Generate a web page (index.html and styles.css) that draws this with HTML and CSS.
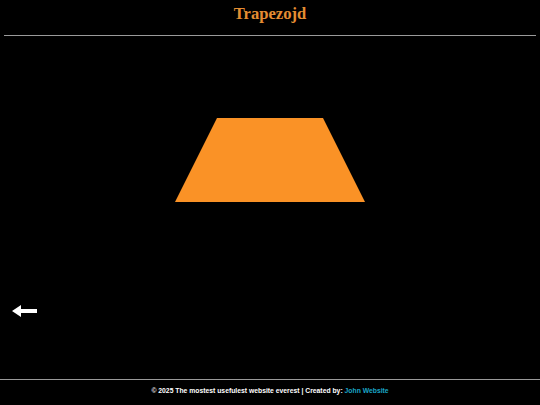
FILE: index.html
```html
<!DOCTYPE html>
<html>
<head>
<meta charset="utf-8">
<link rel="stylesheet" href="styles.css">
</head>
<body>
<div class="page">
  <header class="header">
    <h1 class="title">Trapezojd</h1>
    <hr class="rule">
  </header>
  <main class="main">
    <div class="stage">
      <div class="trapezoid"></div>
    </div>
    <div class="nav">
      <svg class="back" width="26" height="14" viewBox="0 0 26 14">
        <polygon points="0,7 9,1 9,5 25,5 25,9 9,9 9,13" fill="#fff"/>
      </svg>
    </div>
  </main>
  <footer class="footer">
    <p class="credits">© 2025 The mostest usefulest website everest | Created by: <span class="author">John Website</span></p>
  </footer>
</div>
</body>
</html>
```
FILE: styles.css
```css
html, body {
  margin: 0;
  padding: 0;
  background: #000;
}
.page {
  width: 540px;
  height: 405px;
  display: flex;
  flex-direction: column;
}
.header {
  padding: 0 4px;
}
.title {
  margin: 0;
  padding-top: 4px;
  height: 31px;
  text-align: center;
  font-family: "Liberation Serif", serif;
  font-weight: bold;
  font-size: 16.6px;
  line-height: 20px;
  color: #e58d32;
}
.rule {
  margin: 0;
  border: 0;
  height: 1px;
  background: #9a9a9a;
}
.main {
  flex: 1;
  display: flex;
  flex-direction: column;
}
.stage {
  padding-top: 82px;
  display: flex;
  justify-content: center;
}
.trapezoid {
  width: 106px;
  height: 0;
  border-bottom: 84px solid #fa9226;
  border-left: 42px solid transparent;
  border-right: 42px solid transparent;
}
.nav {
  padding: 102px 0 0 12px;
  display: flex;
}
.back {
  display: block;
}
.footer {
  border-top: 1px solid #9a9a9a;
  height: 26px;
  box-sizing: border-box;
  padding-bottom: 5px;
  display: flex;
  align-items: center;
  justify-content: center;
}
.credits {
  margin: 0;
  font-family: "Liberation Sans", Arial, sans-serif;
  font-weight: bold;
  font-size: 6.8px;
  color: #fff;
}
.author {
  color: #1aa6c7;
}
```
